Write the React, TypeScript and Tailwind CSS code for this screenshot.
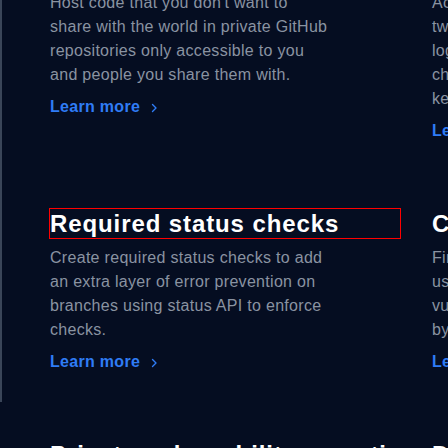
import React from "react";

type Feature = {
  title: string;
  lines: string[];
  outlined?: boolean;
};

const features: Feature[] = [
  {
    title: "Private repos",
    lines: [
      "Host code that you don't want to",
      "share with the world in private GitHub",
      "repositories only accessible to you",
      "and people you share them with.",
    ],
  },
  {
    title: "2FA",
    lines: [
      "Access GitHub securely by adding",
      "two-factor authentication (2FA) to your",
      "login. Choose from TOTP apps, SMS",
      "challenges on a trusted device, or security",
      "keys for extra protection.",
    ],
  },
  {
    title: "Required status checks",
    outlined: true,
    lines: [
      "Create required status checks to add",
      "an extra layer of error prevention on",
      "branches using status API to enforce",
      "checks.",
    ],
  },
  {
    title: "Code scanning",
    lines: [
      "Find and fix security issues early",
      "using automated scanning for",
      "vulnerabilities and coding errors",
      "by analyzing every pull request.",
    ],
  },
  {
    title: "Private vulnerability reporting",
    lines: ["Let researchers report security issues", "to you privately."],
  },
  {
    title: "Dependency review",
    lines: ["Understand the dependencies you add."],
  },
];

function Chevron() {
  return (
    <svg width="8" height="12" viewBox="0 0 8 12" fill="none" className="mt-[2px]">
      <path d="M2.5 2.5l3.5 3.5-3.5 3.5" stroke="#2f7cf6" strokeWidth="1.4" strokeLinecap="round" strokeLinejoin="round" />
    </svg>
  );
}

function FeatureCard({ feature }: { feature: Feature }) {
  return (
    <div className="flex flex-col">
      <h3
        className={
          "text-[24px] leading-[29px] font-bold tracking-[0.9px] text-white mb-2 whitespace-nowrap " +
          (feature.outlined ? "outline outline-[#ff0000]" : "")
        }
      >
        {feature.title}
      </h3>
      <p className="text-[16px] leading-[24px] tracking-[0.3px] text-[#8a93a1] whitespace-nowrap">
        {feature.lines.map((l, i) => (
          <span key={i} className="block">
            {l}
          </span>
        ))}
      </p>
      <a className="mt-2 flex items-center gap-[10px] text-[16px] leading-[24px] font-semibold tracking-[0.3px] text-[#2f7cf6]">
        Learn more
        <Chevron />
      </a>
    </div>
  );
}

export default function App() {
  return (
    <div
      className="w-[448px] h-[448px] overflow-hidden bg-[#050d21]"
      style={{ fontFamily: '"Liberation Sans", Arial, sans-serif' }}
    >
      <div className="h-full border-l-2 border-[#3a4558] pl-12">
        <div className="-mt-[46px] grid grid-cols-[350px_350px] gap-x-8 gap-y-[66px]">
          {features.map((f) => (
            <FeatureCard key={f.title} feature={f} />
          ))}
        </div>
      </div>
    </div>
  );
}
